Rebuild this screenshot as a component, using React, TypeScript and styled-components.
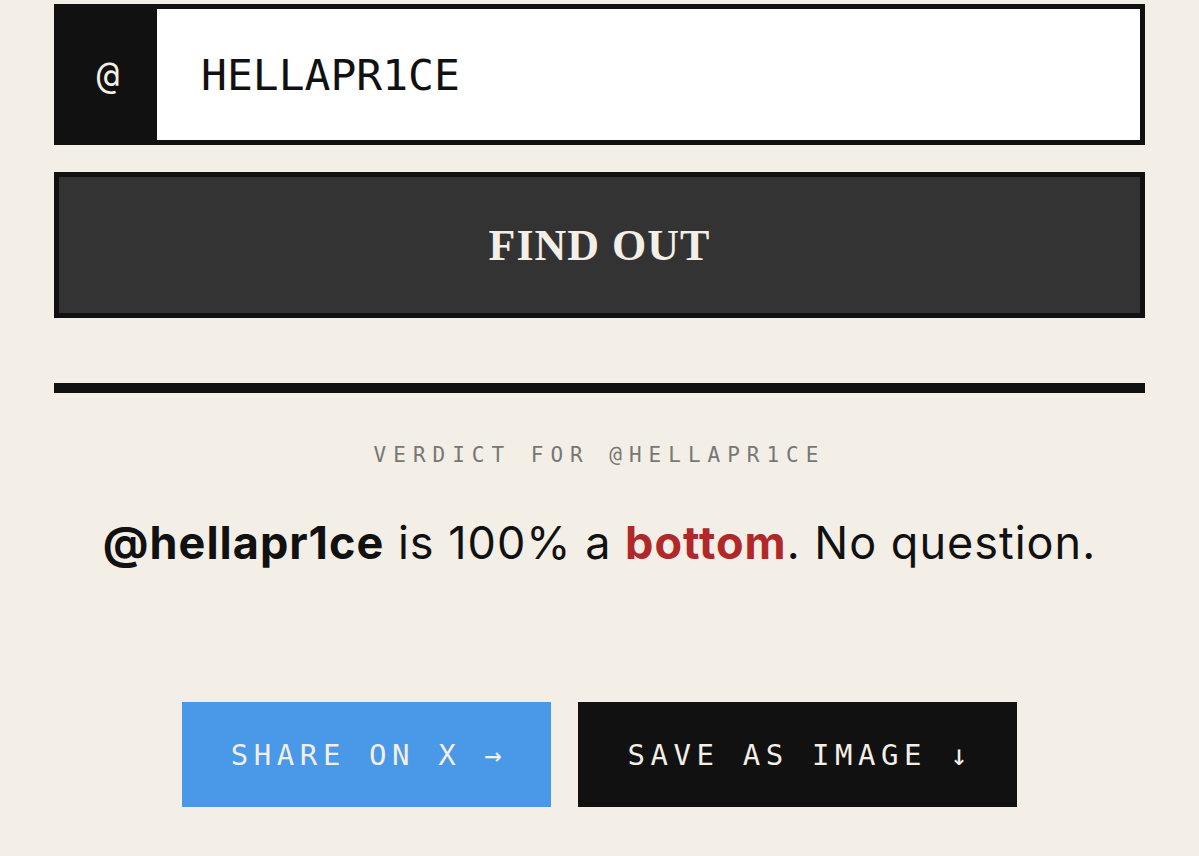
import React, { useState } from 'react';
import styled, { createGlobalStyle } from 'styled-components';

const GlobalStyle = createGlobalStyle`
  html, body {
    margin: 0;
    background: #f3eee6;
  }
  * {
    box-sizing: border-box;
  }
`;

const SPage = styled.main`
  margin: 0 auto;
  max-width: 1091px;
  padding-top: 4px;
`;

const SInputRow = styled.div`
  border: 5px solid #111;
  display: flex;
  height: 141px;
`;

const SAtCell = styled.div`
  align-items: center;
  background: #111;
  color: #f3eee6;
  display: flex;
  font-family: 'DejaVu Sans Mono', 'Liberation Mono', monospace;
  font-size: 38px;
  justify-content: center;
  width: 98px;
`;

const SHandleInput = styled.input`
  background: #fff;
  border: none;
  color: #111;
  flex: 1;
  font-family: 'DejaVu Sans Mono', 'Liberation Mono', monospace;
  font-size: 43px;
  outline: none;
  padding: 0 0 0 44px;
`;

const SFindButton = styled.button`
  background: #333;
  border: 5px solid #111;
  color: #f3eee6;
  cursor: pointer;
  display: block;
  font-family: 'Liberation Serif', 'Times New Roman', serif;
  font-size: 44px;
  font-weight: 700;
  height: 146px;
  letter-spacing: 1px;
  margin-top: 27px;
  width: 100%;
`;

const SDivider = styled.hr`
  background: #111;
  border: none;
  height: 10px;
  margin: 65px 0 0;
`;

const SLabel = styled.p`
  color: #777;
  font-family: 'DejaVu Sans Mono', 'Liberation Mono', monospace;
  font-size: 21px;
  letter-spacing: 7px;
  line-height: 1;
  margin: 52px 0 0;
  text-align: center;
`;

const SVerdict = styled.p`
  color: #111;
  font-family: Inter, 'Noto Sans', sans-serif;
  font-size: 45px;
  letter-spacing: 1px;
  line-height: 1;
  margin: 54px 0 0;
  text-align: center;
`;

const SHandle = styled.strong`
  font-weight: 700;
`;

const SAccent = styled.strong`
  color: #b0282a;
  font-weight: 700;
`;

const SActions = styled.div`
  display: flex;
  gap: 27px;
  justify-content: center;
  margin-top: 137px;
`;

const SActionButton = styled.button<{ $tone: 'blue' | 'dark' }>`
  background: ${({ $tone }) => ($tone === 'blue' ? '#4a98e8' : '#111')};
  border: none;
  color: #f3eee6;
  cursor: pointer;
  font-family: 'DejaVu Sans Mono', 'Liberation Mono', monospace;
  font-size: 29px;
  height: 105px;
  letter-spacing: 5.6px;
  padding: 0 44px 0 49px;
`;

const App: React.FC = () => {
  const [handle, setHandle] = useState('HELLAPR1CE');

  return (
    <>
      <GlobalStyle />
      <SPage>
        <SInputRow>
          <SAtCell>@</SAtCell>
          <SHandleInput
            value={handle}
            onChange={(e) => setHandle(e.target.value)}
            type="text"
          />
        </SInputRow>
        <SFindButton type="button">FIND OUT</SFindButton>
        <SDivider />
        <SLabel>VERDICT FOR @{handle.toUpperCase()}</SLabel>
        <SVerdict>
          <SHandle>@{handle.toLowerCase()}</SHandle> is 100% a <SAccent>bottom</SAccent>. No
          question.
        </SVerdict>
        <SActions>
          <SActionButton $tone="blue" type="button">
            SHARE ON X →
          </SActionButton>
          <SActionButton $tone="dark" type="button">
            SAVE AS IMAGE ↓
          </SActionButton>
        </SActions>
      </SPage>
    </>
  );
};

export default App;
